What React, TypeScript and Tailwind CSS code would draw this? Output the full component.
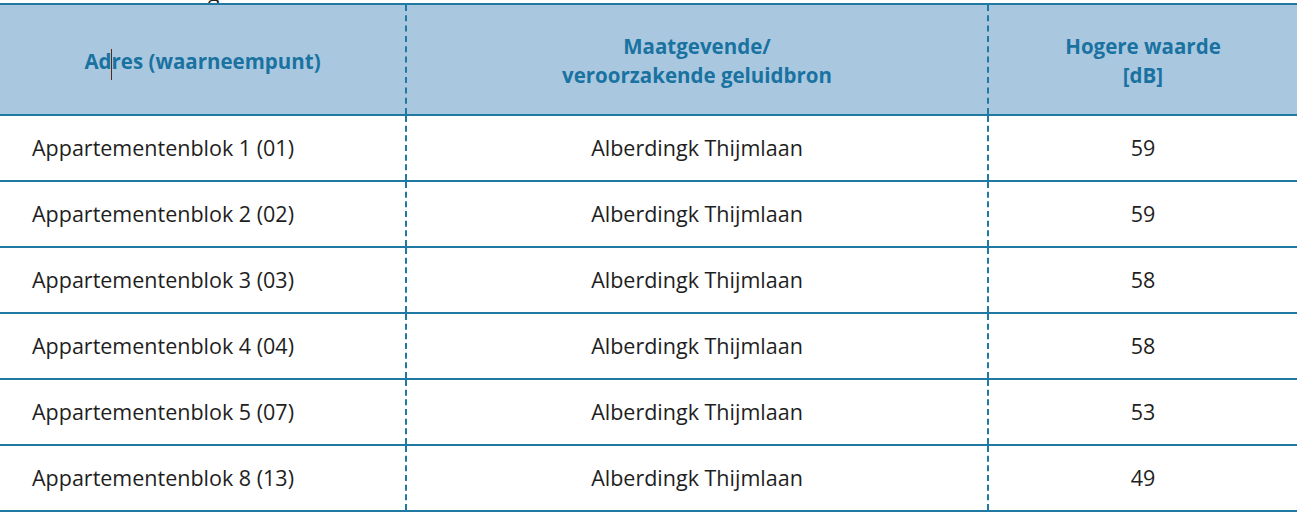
import React from "react";

const rows = [
  ["Appartementenblok 1 (01)", "Alberdingk Thijmlaan", "59"],
  ["Appartementenblok 2 (02)", "Alberdingk Thijmlaan", "59"],
  ["Appartementenblok 3 (03)", "Alberdingk Thijmlaan", "58"],
  ["Appartementenblok 4 (04)", "Alberdingk Thijmlaan", "58"],
  ["Appartementenblok 5 (07)", "Alberdingk Thijmlaan", "53"],
  ["Appartementenblok 8 (13)", "Alberdingk Thijmlaan", "49"],
];

export default function App() {
  return (
    <div className="w-[1302px] h-[515px] bg-white overflow-hidden" style={{ fontFamily: '"Open Sans", "Noto Sans", sans-serif' }}>
      <div className="h-[3px] overflow-hidden pl-[208px]">
        <div className="text-[21px] leading-[21px] -mt-[17px] text-[#222]">g</div>
      </div>
      <div className="w-[1297px] border-t-2 border-[#2079a2]">
        <div className="grid grid-cols-[405px_582px_310px] h-[111px] bg-[#a9c8e0] border-b-2 border-[#2079a2] text-[#1a72a0] font-bold text-[20.5px] leading-[29px]">
          <div className="flex items-center justify-center text-center pt-[8px]">
            <span>
              Ad<span className="inline-block w-[1px] h-[31px] bg-[#5a2a10] align-middle -mx-[0.5px]"></span>res (waarneempunt)
            </span>
          </div>
          <div className="flex items-center justify-center text-center border-l-2 border-dashed border-[#2079a2] pt-[2px]">
            <span>Maatgevende/<br />veroorzakende geluidbron</span>
          </div>
          <div className="flex items-center justify-center text-center border-l-2 border-dashed border-[#2079a2] pt-[2px]">
            <span>Hogere waarde<br />[dB]</span>
          </div>
        </div>
        {rows.map((r, i) => (
          <div key={i} className="grid grid-cols-[405px_582px_310px] h-[66px] border-b-2 border-[#2079a2] text-[21.5px] text-[#1e1e1e]">
            <div className="flex items-center pl-[32px]">{r[0]}</div>
            <div className="flex items-center justify-center border-l-2 border-dashed border-[#2079a2]">{r[1]}</div>
            <div className="flex items-center justify-center border-l-2 border-dashed border-[#2079a2]">{r[2]}</div>
          </div>
        ))}
      </div>
    </div>
  );
}
